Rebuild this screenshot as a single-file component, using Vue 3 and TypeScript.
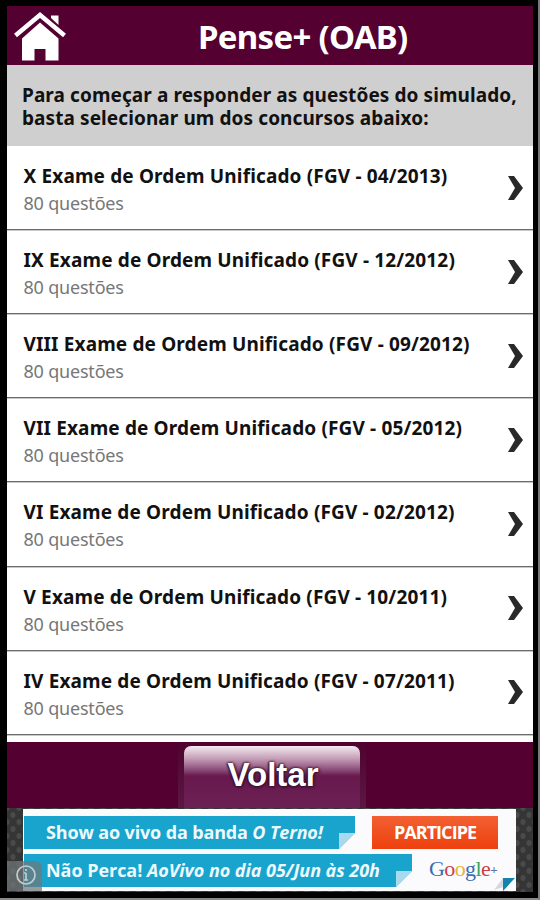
<script setup lang="ts">
interface Exam {
  name: string
  count: string
}

const exams: Exam[] = [
  ['X', '04/2013'],
  ['IX', '12/2012'],
  ['VIII', '09/2012'],
  ['VII', '05/2012'],
  ['VI', '02/2012'],
  ['V', '10/2011'],
  ['IV', '07/2011'],
].map(([edition, date]) => ({
  name: `${edition} Exame de Ordem Unificado (FGV - ${date})`,
  count: '80 questões',
}))
</script>

<template>
  <div class="device">
    <main class="screen">
      <header class="header">
        <svg class="home" viewBox="0 0 54 50" width="54" height="50">
          <path d="M38 4.500h7.500v9.500l-7.500-7z" />
          <path d="M27 11.500 L45.500 27.500 V49.500 H32.500 V38 H21.500 V49.500 H9 V27.500 Z" />
          <path class="roof" d="M2.500 24.500 L27 4 L51.500 24.500" />
        </svg>
        <h1>Pense+ (OAB)</h1>
      </header>
      <section class="intro">
        <div>Para começar a responder as questões do simulado,</div>
        <div>basta selecionar um dos concursos abaixo:</div>
      </section>
      <ul class="list">
        <li v-for="exam in exams" :key="exam.name" class="row">
          <div class="info">
            <div class="name">{{ exam.name }}</div>
            <div class="count">{{ exam.count }}</div>
          </div>
          <svg class="chevron" viewBox="0 0 16 26" width="16" height="26">
            <path d="M0 1h6l9 12-9 12H0l7-12z" />
          </svg>
        </li>
      </ul>
      <footer class="footer">
        <button class="back"><span>Voltar</span></button>
      </footer>
      <aside class="ad">
        <div class="banner">
          <div class="ad-line">
            <div class="ribbon first"><span>Show ao vivo da banda <em>O Terno!</em></span><i class="fold"></i></div>
            <div class="join"><span>PARTICIPE</span></div>
          </div>
          <div class="ad-line">
            <div class="ribbon second"><span>Não Perca! <em>AoVivo no dia 05/Jun às 20h</em></span><i class="fold"></i></div>
            <div class="google"><span class="b">G</span><span class="r">o</span><span class="y">o</span><span class="b">g</span><span class="g">l</span><span class="r">e</span><span class="plus">+</span></div>
          </div>
          <svg class="corner" viewBox="0 0 21 13" width="21" height="13">
            <path d="M0 12 9 0v9z" fill="#d3d8df" />
            <path d="M9 0h12L9 13z" fill="#1682ae" />
          </svg>
        </div>
        <div class="badge">
          <svg viewBox="0 0 22 22" width="22" height="22">
            <circle cx="11" cy="11" r="9" />
            <path d="M11 9v7M11 5v2M9 9h2M9 16h4" />
          </svg>
        </div>
      </aside>
    </main>
  </div>
</template>

<style>
body {
  margin: 0;
  background: #000;
}
</style>

<style scoped>
* {
  box-sizing: border-box;
}
.device {
  width: 540px;
  height: 900px;
  padding: 6px 5px 6px 7px;
  background: #000;
  border-right: 2px solid #77797a;
  border-bottom: 2px solid #88898a;
  font-family: "Noto Sans", "Open Sans", sans-serif;
  overflow: hidden;
}
.screen {
  width: 526px;
  height: 886px;
  display: flex;
  flex-direction: column;
  background: #fff;
}
.header {
  height: 59px;
  flex: none;
  display: flex;
  align-items: center;
  background: #540030;
  color: #fff;
  padding-left: 6px;
}
.home {
  fill: #fff;
  flex: none;
  margin-top: 1px;
}
.home .roof {
  fill: none;
  stroke: #fff;
  stroke-width: 4.5;
}
h1 {
  margin: 2px 0 0 131px;
  font-size: 33px;
  line-height: 44px;
  font-weight: 700;
  letter-spacing: -0.7px;
  white-space: nowrap;
}
.intro {
  height: 81px;
  flex: none;
  padding: 19px 0 0 15px;
  background: #cfcfcf;
  color: #111;
  font-size: 19px;
  line-height: 23px;
  font-weight: 700;
  letter-spacing: 0.09px;
  white-space: nowrap;
}
.list {
  list-style: none;
  margin: 0;
  padding: 0;
  height: 596px;
  flex: none;
}
.row {
  height: 84.12px;
  display: flex;
  justify-content: space-between;
  border-bottom: 1px solid #6c6c6c;
  box-shadow: 0 1px #c8c8c8;
  padding: 17px 9px 0 16.5px;
}
.name {
  font-size: 19px;
  line-height: 27px;
  font-weight: 700;
  letter-spacing: 0.15px;
  color: #111;
  white-space: nowrap;
}
.count {
  font-size: 18px;
  line-height: 27px;
  letter-spacing: -0.2px;
  color: #777;
}
.chevron {
  fill: #292929;
  margin-top: 11.5px;
  flex: none;
}
.footer {
  height: 66px;
  flex: none;
  display: flex;
  justify-content: center;
  background: #540030;
}
.back {
  width: 188px;
  height: 66px;
  margin-left: 4px;
  padding: 3px 6px 0;
  border: 0;
  background: linear-gradient(#50032f, #5b1744);
  font: 700 33px/58px "Liberation Sans", sans-serif;
  color: #fff;
}
.back span {
  display: block;
  height: 62px;
  padding-left: 2px;
  border-radius: 7px 7px 0 0;
  background: linear-gradient(#f4eaf1 0, #c39bb5 13px, #8a4c78 24px, #68194e 30px, #6b2154 100%);
  text-shadow: 0 0 3px #351028, 1px 1px 3px #351028, -1px 0 2px #351028;
}
.ad {
  position: relative;
  height: 84px;
  flex: none;
  padding: 1px 17px 0 16px;
  background-color: #353535;
  background-image: radial-gradient(#4a4a4a 25%, transparent 35%), radial-gradient(#4a4a4a 25%, transparent 35%);
  background-size: 12px 14px;
  background-position: 0 0, 6px 7px;
}
.banner {
  position: relative;
  height: 82px;
  padding: 7px 0 0 1px;
  background: #fbfbfd;
}
.ad-line {
  display: flex;
  height: 33px;
  margin-bottom: 5px;
}
.ribbon {
  position: relative;
  height: 33px;
  padding-left: 22px;
  background: #18a4cc;
  color: #eefaff;
  font: 700 18px/32px "Open Sans", sans-serif;
  letter-spacing: -0.14px;
  white-space: nowrap;
}
.second {
  letter-spacing: -0.04px;
}
.first {
  width: 331px;
  margin-right: 17px;
}
.second {
  width: 388px;
}
.fold {
  position: absolute;
  right: 0;
  bottom: 0;
  width: 16px;
  height: 16px;
  background: linear-gradient(135deg, #a8d9ec 0 50%, #fbfbfd 51%);
}
.join {
  width: 126px;
  height: 33px;
  background: linear-gradient(#f26032, #ee400e);
  color: #fff;
  font: 700 18px/33px "Open Sans", sans-serif;
  letter-spacing: -0.95px;
  text-align: center;
}
.google {
  margin-left: 17px;
  font: 22px/29px "Liberation Serif", serif;
  letter-spacing: -0.6px;
  white-space: nowrap;
}
.b { color: #3c6cb4; }
.r { color: #cf3d49; }
.y { color: #e5b630; }
.g { color: #36a35d; }
.plus {
  color: #5475a8;
  font-size: 13px;
  font-weight: 700;
  vertical-align: 2px;
}
.corner {
  position: absolute;
  right: 1px;
  bottom: 0;
}
.badge {
  position: absolute;
  left: 0;
  bottom: 1px;
  width: 35px;
  height: 30px;
  padding: 3px 0 0 8px;
  border-radius: 0 7px 0 0;
  background: rgba(112, 119, 122, 0.72);
}
.badge svg {
  display: block;
  fill: none;
  stroke: #c4cccf;
  stroke-width: 1.7;
}
</style>
